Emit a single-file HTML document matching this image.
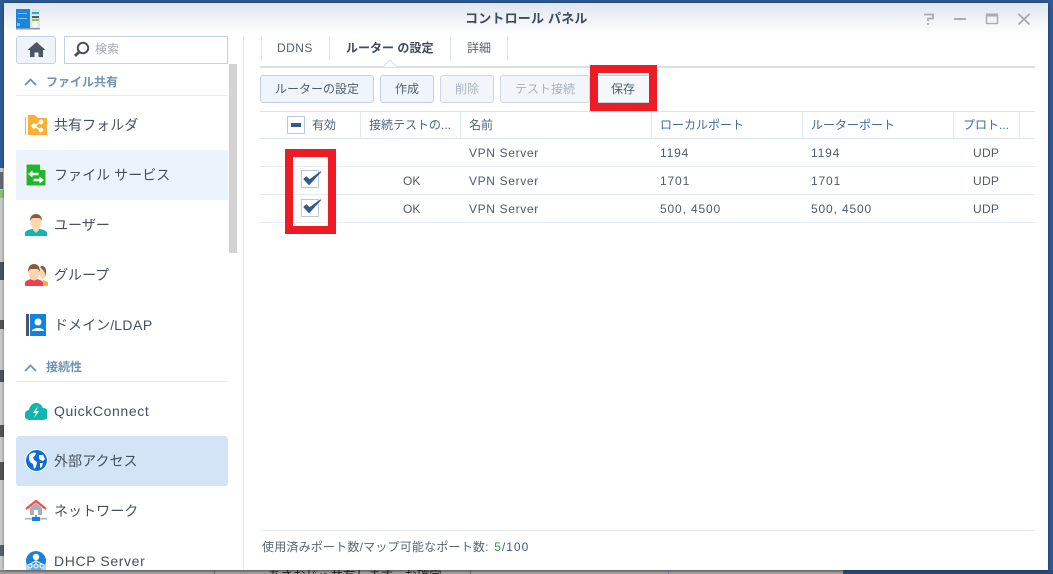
<!DOCTYPE html>
<html lang="ja"><head><meta charset="utf-8"><style>
html,body{margin:0;padding:0}
body{width:1053px;height:574px;overflow:hidden;position:relative;background:#2e5b95;font-family:"Liberation Sans","Noto Sans CJK JP",sans-serif;color:#505a64}
div,span,svg{position:absolute}
.t{white-space:nowrap;line-height:18px}
.nav{font-size:14px;left:54px;letter-spacing:.05px;color:#46505c}
.lat{letter-spacing:.62px}
.sec{font-size:12px;font-weight:bold;left:46px;color:#6e94b5}
.btn{top:75px;height:26px;border:1px solid #c5d1de;border-radius:3px;background:#f0f5fb;font-size:12px;text-align:center;line-height:26px;color:#4f5e70}
.dis{color:#a9b2bc;background:#f2f6fb;border-color:#cfd8e2}
.line{background:#e5ebf1;height:1px}
.h{top:116px;font-size:12px;color:#50657e}
.c{font-size:12px;letter-spacing:.65px;color:#505a64}
.n{letter-spacing:.85px}
.u{letter-spacing:.3px}
.red{background:#ed1c24}
.cb{width:17px;height:17px;border:1px solid #bcc8d6;box-sizing:border-box;background:#fff}
.colsep{top:112px;width:1px;height:26px;background:#dfe8f1}
</style></head><body>

<!-- background strips -->
<div style="left:0;top:168px;width:4px;height:406px;background:#c9c9c9"></div>
<div style="left:0;top:172px;width:3px;height:17px;background:#667"></div>
<div style="left:0;top:190px;width:4px;height:8px;background:#8cc36f"></div>
<div style="left:0;top:262px;width:4px;height:18px;background:#4b525c"></div>
<div style="left:0;top:320px;width:4px;height:9px;background:#555"></div>
<div style="left:0;top:370px;width:4px;height:12px;background:#4d5560"></div>
<div style="left:0;top:425px;width:4px;height:12px;background:#555"></div>
<div style="left:0;top:462px;width:4px;height:18px;background:#555"></div>
<div style="left:0;top:545px;width:4px;height:11px;background:#59616b"></div>
<div style="left:0;top:570px;width:843px;height:4px;background:linear-gradient(#777,#a8a8a8);overflow:hidden">
<div class="t" style="left:268px;top:0;font-size:12.5px;color:#222;line-height:13px">あさおじゅ共有します。お確定</div>
</div>
<div style="left:214px;top:570px;width:1px;height:4px;background:#667"></div>
<div style="left:470px;top:570px;width:1px;height:4px;background:#667"></div>
<div style="left:668px;top:570px;width:1px;height:4px;background:#6d7a8c"></div>
<div style="left:843px;top:570px;width:210px;height:4px;background:#264a7c"></div>

<!-- window -->
<div style="left:4px;top:3px;width:1044px;height:567px;background:#fff;overflow:hidden;box-shadow:0 0 3px rgba(0,0,0,.45)"></div>
<div style="left:4px;top:3px;width:1044px;height:32px;background:linear-gradient(#dfe6ef,#fff)"></div>

<!-- app icon -->
<svg style="left:16px;top:9px" width="24" height="21" viewBox="0 0 24 21"><rect width="24" height="20" fill="#dfe3e6"/><rect width="14" height="19" fill="#1a86e0"/><rect x="2" y="4" width="9" height="1" fill="#7cc4f5"/><rect x="2" y="9" width="9" height="1" fill="#7cc4f5"/><rect x="1" y="14" width="3" height="3" fill="#7cc4f5"/><rect x="16" y="3" width="7" height="2" fill="#23b0c8"/><rect x="16" y="7" width="7" height="2" fill="#50606c"/><rect x="16" y="10" width="7" height="2" fill="#8cc63f"/><circle cx="19" cy="15.500" r="3" fill="#f4f6f7"/><rect y="19" width="24" height="1.500" fill="#8a97a3"/></svg>

<div class="t" style="left:465px;top:10px;font-size:13px;font-weight:bold;letter-spacing:.2px;color:#3d4c5e">コントロール パネル</div>

<!-- window controls -->
<svg style="left:920px;top:10px" width="115" height="18" viewBox="0 0 115 18" fill="none" stroke="#a5acb4" stroke-width="2"><path d="M4 4.500h9v4H8v2.500M8 13v2" stroke-width="1.800"/><path d="M34 9h12"/><rect x="66.500" y="4.500" width="11" height="9" stroke-width="1.400"/><path d="M66 5h12" stroke-width="3"/><path d="M98.500 4l11 10.500M109.500 4L98.500 14.500" stroke-width="1.800"/></svg>

<!-- home & search -->
<div style="left:16px;top:36px;width:38px;height:26px;border:1px solid #c5d1de;border-radius:3px;background:#eff4fa"></div>
<svg style="left:27px;top:41px" width="19" height="17" viewBox="0 0 19 17"><path d="M9.500 1L0.500 9h2.500v7h4.500v-4.500h4V16H16V9h2.500z" fill="#4b5563"/></svg>
<div style="left:64px;top:36px;width:162px;height:26px;border:1px solid #c5d1de;background:#fff"></div>
<svg style="left:73px;top:41px" width="17" height="17" viewBox="0 0 17 17" fill="none" stroke="#4a4f55"><circle cx="10" cy="7" r="5.200" stroke-width="2"/><path d="M6.500 10.500L2 15" stroke-width="2.800"/></svg>
<div class="t" style="left:95px;top:40px;font-size:12px;color:#a2a9b1">検索</div>

<!-- scrollbar & divider -->
<div style="left:229px;top:64px;width:8px;height:189px;background:#d3d3d3"></div>
<div style="left:243px;top:36px;width:1px;height:534px;background:#e4e7ea"></div>

<!-- sidebar -->
<svg style="left:24px;top:77px" width="13" height="9" viewBox="0 0 13 9" fill="none" stroke="#6e94b5" stroke-width="1.800"><path d="M1 8l5.500-5.500L12 8"/></svg>
<div class="t sec" style="top:73px">ファイル共有</div>
<div class="line" style="left:16px;top:95px;width:212px;height:1px"></div>

<svg style="left:25px;top:115px" width="22" height="20" viewBox="0 0 22 20"><path d="M0 2h1v18H0z" fill="#fbb034"/><path d="M3 0h7l3 3h9v17H3z" fill="#fbb034"/><g stroke="#fff" fill="#fff" stroke-width="1.300"><path d="M16 7L9 11l7 4" fill="none"/><circle cx="9" cy="11" r="2"/><circle cx="16" cy="7" r="1.700"/><circle cx="16" cy="15" r="1.700"/></g></svg>
<div class="t nav" style="top:116px">共有フォルダ</div>

<div style="left:16px;top:150px;width:212px;height:50px;background:#ebf3fc"></div>
<svg style="left:25px;top:163px" width="22" height="24" viewBox="0 0 22 24"><path d="M1 1h14l6 6v16H1z" fill="#23b42e" stroke="#fff"/><path d="M15 1v6h6z" fill="#d8f2d8"/><path d="M3 11l4.500-3.500v2.300h6v2.400h-6v2.300zM19 17l-4.500-3.500v2.300h-6v2.400h6v2.300z" fill="#fff"/></svg>
<div class="t nav" style="top:166px">ファイル サービス</div>

<svg style="left:25px;top:214px" width="22" height="22" viewBox="0 0 22 22"><path d="M0 22v-3c0-2 3-3 7-4h8c4 1 7 2 7 4v3z" fill="#10b5b5"/><path d="M8 14h6v2l-3 3-3-3z" fill="#fbd7b0"/><ellipse cx="11" cy="8" rx="5.500" ry="7" fill="#fbd7b0"/><path d="M5 7C5 2 8 0 11 0s6 2 6 7c-1-2-2-3-3-3H8C7 4 6 5 5 7z" fill="#8a5a36"/></svg>
<div class="t nav" style="top:216px">ユーザー</div>

<svg style="left:25px;top:264px" width="23" height="22" viewBox="0 0 23 22"><ellipse cx="18" cy="9" rx="3.500" ry="6" fill="#fbd7b0"/><path d="M15 3c2-2 5-1 6 3v6c-1-3-2-5-3-6z" fill="#8a5a36"/><path d="M18 16l5 2v4h-5z" fill="#fbb034"/><path d="M0 22v-3c0-2 3-3 6-4h6c3 1 6 2 6 4v3z" fill="#f04050"/><ellipse cx="9" cy="9" rx="5.500" ry="7.500" fill="#fbd7b0"/><path d="M3 8C3 2 6 0 9 0s6 2 6 8c-1-2-2-3-3-3H6C5 5 4 6 3 8z" fill="#8a5a36"/></svg>
<div class="t nav" style="top:266px">グループ</div>

<svg style="left:26px;top:314px" width="20" height="22" viewBox="0 0 20 22"><rect width="3" height="22" fill="#4b5563"/><rect x="4" width="16" height="22" fill="#1282e0"/><circle cx="12" cy="8" r="3.500" fill="#fff"/><path d="M6 17c0-2 4-3 6-3s6 1 6 3z" fill="#fff"/></svg>
<div class="t nav" style="top:316px">ドメイン/<span style="position:static;letter-spacing:.5px">LDAP</span></div>

<svg style="left:24px;top:363px" width="13" height="9" viewBox="0 0 13 9" fill="none" stroke="#6e94b5" stroke-width="1.800"><path d="M1 8l5.500-5.500L12 8"/></svg>
<div class="t sec" style="top:358px">接続性</div>
<div class="line" style="left:16px;top:381px;width:212px"></div>

<svg style="left:25px;top:401px" width="22" height="20" viewBox="0 0 22 20"><path d="M5 19a5 5 0 0 1-1-10C5 4 8 2 11 2c3 0 5 1 7 5a6 6 0 0 1 0 12z" fill="#10b5ad"/><path d="M13 5l-5 7h3l-2 5 5-7h-3z" fill="#fff"/></svg>
<div class="t nav lat" style="top:402px">QuickConnect</div>

<div style="left:16px;top:436px;width:212px;height:50px;background:#d3e4f7;border-radius:3px"></div>
<svg style="left:25px;top:449px" width="23" height="23" viewBox="0 0 23 23"><circle cx="11.500" cy="11.500" r="11" fill="#0f6fd0" stroke="#fff"/><path d="M4 6c2-2 5-3 7-2l-1 3-2 1 1 3 3 2-1 5-2 2-1-5-3-2-1-3zM14 6l4 0 2 4-2 2-3-1-1-2zM15 14l3 0-1 4-2 1z" fill="#fff"/></svg>
<div class="t nav" style="top:452px">外部アクセス</div>

<svg style="left:25px;top:499px" width="22" height="23" viewBox="0 0 22 23"><path d="M5 9v7h12V9l-6-5z" fill="#a8b0ba"/><rect x="9" y="11" width="4" height="5" fill="#fff"/><path d="M1 10l10-8 10 8" fill="none" stroke="#f25050" stroke-width="2.400"/><rect x="10" y="16" width="2" height="3" fill="#8a97a3"/><rect x="0" y="19" width="22" height="1.500" fill="#a8b0ba"/><rect x="7" y="18" width="8" height="4" fill="#1282e0"/></svg>
<div class="t nav" style="top:502px">ネットワーク</div>

<div style="left:4px;top:536px;width:239px;height:34px;overflow:hidden">
<svg style="left:22px;top:15px" width="20" height="19" viewBox="0 0 20 19"><circle cx="10" cy="10" r="10" fill="#1a80d8"/><circle cx="10" cy="6" r="3.200" fill="#fff"/><path d="M0 13h20v6H0z" fill="#8cc2ef" opacity=".7"/><g fill="none" stroke="#fff"><circle cx="4" cy="15" r="2"/><circle cx="10" cy="15" r="2"/><circle cx="16" cy="15" r="2"/><path d="M10 8v5M10 10L4 13M10 10l6 3"/></g></svg>
<div class="t nav lat" style="left:50px;top:16px">DHCP Server</div>
</div>

<!-- tabs -->
<div style="left:261px;top:36px;width:1px;height:24px;background:#dce4ec"></div>
<div style="left:329px;top:36px;width:1px;height:24px;background:#dce4ec"></div>
<div style="left:450px;top:36px;width:1px;height:24px;background:#dce4ec"></div>
<div style="left:507px;top:36px;width:1px;height:24px;background:#dce4ec"></div>
<div class="t" style="left:277px;top:39px;font-size:12px;letter-spacing:.45px;color:#55606c">DDNS</div>
<div class="t" style="left:346px;top:39px;font-size:12px;font-weight:bold;letter-spacing:.02px;color:#3e4c5c">ルーター の設定</div>
<div class="t" style="left:467px;top:39px;font-size:12px;color:#55606c">詳細</div>
<div style="left:260px;top:66px;width:775px;height:2px;background:#dcdfe2"></div>
<svg style="left:383px;top:59px" width="14" height="8" viewBox="0 0 14 8"><path d="M0 8l7-7 7 7" fill="#fff" stroke="#dcdfe2"/></svg>

<!-- toolbar -->
<div class="btn" style="left:260px;width:112px">ルーターの設定</div>
<div class="btn" style="left:380px;width:52px">作成</div>
<div class="btn dis" style="left:440px;width:52px">削除</div>
<div class="btn dis" style="left:500px;width:88px">テスト接続</div>
<div class="btn" style="left:594px;top:75px;width:56px;background:#f4f7fb">保存</div>

<!-- red box 1 -->
<div class="red" style="left:590px;top:65px;width:67px;height:8px"></div>
<div class="red" style="left:590px;top:103px;width:67px;height:9px"></div>
<div class="red" style="left:590px;top:65px;width:8px;height:47px"></div>
<div class="red" style="left:649px;top:65px;width:8px;height:47px"></div>

<!-- table -->
<div class="line" style="left:260px;top:111px;width:775px;background:#dbe3eb"></div>
<div class="line" style="left:260px;top:138px;width:775px;background:#dbe3eb"></div>
<div class="colsep" style="left:360px"></div>
<div class="colsep" style="left:460px"></div>
<div class="colsep" style="left:651px"></div>
<div class="colsep" style="left:802px"></div>
<div class="colsep" style="left:953px"></div>
<div class="colsep" style="left:1019px"></div>
<div class="cb" style="left:287px;top:116px;width:18px;height:18px"></div>
<div style="left:291px;top:123px;width:10px;height:4px;background:#36588c"></div>
<div class="t h" style="left:312px">有効</div>
<div class="t h" style="left:369px">接続テストの...</div>
<div class="t h" style="left:469px">名前</div>
<div class="t h" style="left:660px;color:#3f6a9c">ローカルポート</div>
<div class="t h" style="left:811px;color:#3f6a9c">ルーターポート</div>
<div class="t h" style="left:963px;color:#3f6a9c">プロト...</div>

<div class="line" style="left:260px;top:166px;width:775px"></div>
<div class="line" style="left:260px;top:194px;width:775px"></div>
<div class="line" style="left:260px;top:222px;width:775px"></div>

<div class="t c" style="left:469px;top:144px">VPN Server</div>
<div class="t c n" style="left:660px;top:144px">1194</div>
<div class="t c n" style="left:811px;top:144px">1194</div>
<div class="t c u" style="left:973px;top:144px">UDP</div>

<div class="t c" style="left:403px;top:172px;letter-spacing:.1px">OK</div>
<div class="t c" style="left:469px;top:172px">VPN Server</div>
<div class="t c n" style="left:660px;top:172px">1701</div>
<div class="t c n" style="left:811px;top:172px">1701</div>
<div class="t c u" style="left:973px;top:172px">UDP</div>

<div class="t c" style="left:403px;top:200px;letter-spacing:.1px">OK</div>
<div class="t c" style="left:469px;top:200px">VPN Server</div>
<div class="t c n" style="left:660px;top:200px">500, 4500</div>
<div class="t c n" style="left:811px;top:200px">500, 4500</div>
<div class="t c u" style="left:973px;top:200px">UDP</div>

<div class="cb" style="left:301px;top:170px;width:18px;height:18px"></div>
<svg style="left:302px;top:170px" width="20" height="18" viewBox="0 0 20 18"><path d="M2 9l5 5.500L18.500 2 7.500 10 4.500 7z" fill="#36588c" stroke="#36588c" stroke-width="1.200" stroke-linejoin="round"/></svg>
<div class="cb" style="left:301px;top:199px;width:18px;height:18px"></div>
<svg style="left:302px;top:198px" width="20" height="18" viewBox="0 0 20 18"><path d="M2 9l5 5.500L18.500 2 7.500 10 4.500 7z" fill="#36588c" stroke="#36588c" stroke-width="1.200" stroke-linejoin="round"/></svg>

<!-- red box 2 -->
<div class="red" style="left:285px;top:149px;width:51px;height:8px"></div>
<div class="red" style="left:285px;top:226px;width:51px;height:8px"></div>
<div class="red" style="left:285px;top:149px;width:8px;height:85px"></div>
<div class="red" style="left:328px;top:149px;width:8px;height:85px"></div>

<!-- footer -->
<div class="line" style="left:260px;top:530px;width:775px;background:#e8ecf0"></div>
<div class="t" style="left:262px;top:538px;font-size:12px;letter-spacing:.2px;color:#5a6672">使用済みポート数/マップ可能なポート数: <span style="position:static;color:#2d9a2d;letter-spacing:1px;margin-left:2px">5</span><span style="position:static;color:#3a5a8a;letter-spacing:1px">/100</span></div>
</body></html>
